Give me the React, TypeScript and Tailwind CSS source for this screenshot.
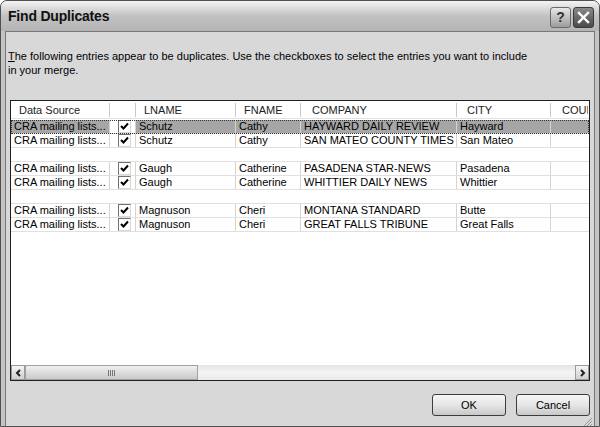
import { ReactNode } from "react";

type Row = { src: string; lname: string; fname: string; company: string; city: string } | null;

const rows: Row[] = [
  { src: "CRA mailing lists...", lname: "Schutz", fname: "Cathy", company: "HAYWARD DAILY REVIEW", city: "Hayward" },
  { src: "CRA mailing lists...", lname: "Schutz", fname: "Cathy", company: "SAN MATEO COUNTY TIMES", city: "San Mateo" },
  null,
  { src: "CRA mailing lists...", lname: "Gaugh", fname: "Catherine", company: "PASADENA STAR-NEWS", city: "Pasadena" },
  { src: "CRA mailing lists...", lname: "Gaugh", fname: "Catherine", company: "WHITTIER DAILY NEWS", city: "Whittier" },
  null,
  { src: "CRA mailing lists...", lname: "Magnuson", fname: "Cheri", company: "MONTANA STANDARD", city: "Butte" },
  { src: "CRA mailing lists...", lname: "Magnuson", fname: "Cheri", company: "GREAT FALLS TRIBUNE", city: "Great Falls" },
];

function Check() {
  return (
    <span className="flex h-[13px] w-[13px] items-center justify-center border-t border-l border-[#707070] border-r-[#d8d8d8] border-b-[#d8d8d8] border-r border-b bg-white">
      <svg width="9" height="9" viewBox="0 0 9 9">
        <path d="M1 4 L3.5 6.5 L8 1.5" stroke="#000" strokeWidth="2" fill="none" />
      </svg>
    </span>
  );
}

function Head({ w, children, last }: { w: string; children?: ReactNode; last?: boolean }) {
  return (
    <div className={`${w} relative flex h-full shrink-0 items-center pl-2 pt-[1px]`}>
      {children}
      {!last && <span className="absolute right-0 top-[2px] h-[14px] w-px bg-[#c8c8c8]" />}
    </div>
  );
}

function Cell({ w, children, sel }: { w: string; children?: ReactNode; sel?: boolean }) {
  return (
    <div
      className={`${w} flex h-full shrink-0 items-center overflow-hidden whitespace-nowrap border-r border-[#d4d4d4] pl-[3px] ${
        sel ? "bg-[#a6a6a6]" : ""
      }`}
    >
      {children}
    </div>
  );
}

export default function App() {
  return (
    <div
      className="flex h-[427px] w-[600px] flex-col overflow-hidden rounded-t-[7px] border border-[#505050] bg-[#c4c4c4] text-[11px] text-black"
      style={{ fontFamily: '"Liberation Sans", Arial, sans-serif' }}
    >
      {/* title bar */}
      <div className="flex h-[30px] shrink-0 items-center justify-between bg-gradient-to-b from-[#f4f4f4] via-[#c2c2c2] to-[#b4b4b4] pl-[7px] pr-[5px]">
        <span className="text-[14px] font-bold tracking-[-0.2px] text-[#111]">Find Duplicates</span>
        <div className="flex gap-[2px] pt-[2px]">
          <div className="flex h-[21px] w-[21px] items-center justify-center rounded-[3px] border border-[#6a6a6a] bg-gradient-to-b from-[#e8e8e8] to-[#9c9c9c] text-[14px] font-bold text-[#333]">
            ?
          </div>
          <div className="flex h-[21px] w-[21px] items-center justify-center rounded-[3px] border border-[#3a3a3a] bg-gradient-to-b from-[#8a8a8a] to-[#4a4a4a]">
            <svg width="13" height="13" viewBox="0 0 13 13">
              <path d="M2 2 L11 11 M11 2 L2 11" stroke="#fff" strokeWidth="2.4" strokeLinecap="square" />
            </svg>
          </div>
        </div>
      </div>

      {/* frame + client */}
      <div className="flex flex-1 flex-col px-[4px] pb-[4px]">
        <div className="flex flex-1 flex-col border border-[#777] bg-[#d8d8d8]">
          <p className="mt-[17px] px-[2px] leading-[14px]">
            <span className="underline">T</span>he following entries appear to be duplicates. Use the checkboxes to select the entries you want to include
            <br />
            in your merge.
          </p>

          {/* list view */}
          <div className="mx-[4px] mt-[23px] flex h-[281px] flex-col border border-[#202020] bg-white">
            <div className="flex h-[18px] shrink-0 border-b border-[#e2e2e2] text-[#222]">
              <Head w="w-[99px]">Data Source</Head>
              <Head w="w-[26px]" />
              <Head w="w-[100px]">LNAME</Head>
              <Head w="w-[65px]">FNAME</Head>
              <Head w="w-[156px]">
                <span className="pl-[3px]">COMPANY</span>
              </Head>
              <Head w="w-[94px]">
                <span className="pl-[2px]">CITY</span>
              </Head>
              <Head w="w-[37px]" last>
                <span className="overflow-hidden whitespace-nowrap pl-[3px]">COUNTRY</span>
              </Head>
            </div>
            <div className="flex-1 overflow-hidden pt-px">
              {rows.map((r, i) =>
                r ? (
                  <div
                    key={i}
                    className={`flex h-[14px] border-b border-[#e0e0e0] ${
                      i === 0 ? "outline-1 outline-dotted -outline-offset-1 outline-[#333]" : ""
                    }`}
                  >
                    <Cell w="w-[99px]" sel={i === 0}>{r.src}</Cell>
                    <div className="flex h-full w-[26px] shrink-0 items-center border-r border-[#d4d4d4] pl-[8px]">
                      <Check />
                    </div>
                    <Cell w="w-[100px]" sel={i === 0}>{r.lname}</Cell>
                    <Cell w="w-[65px]" sel={i === 0}>{r.fname}</Cell>
                    <Cell w="w-[156px]" sel={i === 0}>{r.company}</Cell>
                    <Cell w="w-[94px]" sel={i === 0}>{r.city}</Cell>
                    <Cell w="flex-1 border-r-0" sel={i === 0} />
                  </div>
                ) : (
                  <div key={i} className="h-[14px] border-b border-[#e0e0e0]" />
                )
              )}
            </div>

            {/* horizontal scrollbar */}
            <div className="flex h-[15px] shrink-0 bg-gradient-to-b from-[#e4e4e4] via-[#f4f4f4] to-[#eaeaea]">
              <div className="flex w-[14px] items-center justify-center border border-[#9a9a9a] bg-gradient-to-b from-[#f4f4f4] to-[#d0d0d0]">
                <svg width="7" height="8" viewBox="0 0 7 8">
                  <path d="M5 1 L2 4 L5 7" stroke="#222" strokeWidth="2" fill="none" />
                </svg>
              </div>
              <div className="flex w-[173px] items-center justify-center border border-[#a0a0a0] bg-gradient-to-b from-[#f0f0f0] to-[#cacaca]">
                <svg width="8" height="6" viewBox="0 0 8 6">
                  <path d="M0.5 0 V6 M2.5 0 V6 M4.5 0 V6 M6.5 0 V6" stroke="#777" strokeWidth="1" />
                </svg>
              </div>
              <div className="flex-1" />
              <div className="flex w-[14px] items-center justify-center border border-[#9a9a9a] bg-gradient-to-b from-[#f4f4f4] to-[#d0d0d0]">
                <svg width="7" height="8" viewBox="0 0 7 8">
                  <path d="M2 1 L5 4 L2 7" stroke="#222" strokeWidth="2" fill="none" />
                </svg>
              </div>
            </div>
          </div>

          {/* buttons */}
          <div className="mt-[13px] flex justify-end gap-[10px] pr-[4px]">
            <button className="h-[22px] w-[74px] rounded-[3px] border border-[#3c3c3c] bg-gradient-to-b from-[#f6f6f6] via-[#e6e6e6] to-[#c8c8c8] text-[11px]">
              OK
            </button>
            <button className="h-[22px] w-[74px] rounded-[3px] border border-[#3c3c3c] bg-gradient-to-b from-[#f6f6f6] via-[#e6e6e6] to-[#c8c8c8] text-[11px]">
              Cancel
            </button>
          </div>
          <div className="flex flex-1 items-end justify-end">
            <svg width="11" height="11" viewBox="0 0 11 11" className="mb-px mr-px">
              <path d="M10 2 L2 10 M10 5 L5 10 M10 8 L8 10" stroke="#999" strokeWidth="1" />
            </svg>
          </div>
        </div>
      </div>
    </div>
  );
}
